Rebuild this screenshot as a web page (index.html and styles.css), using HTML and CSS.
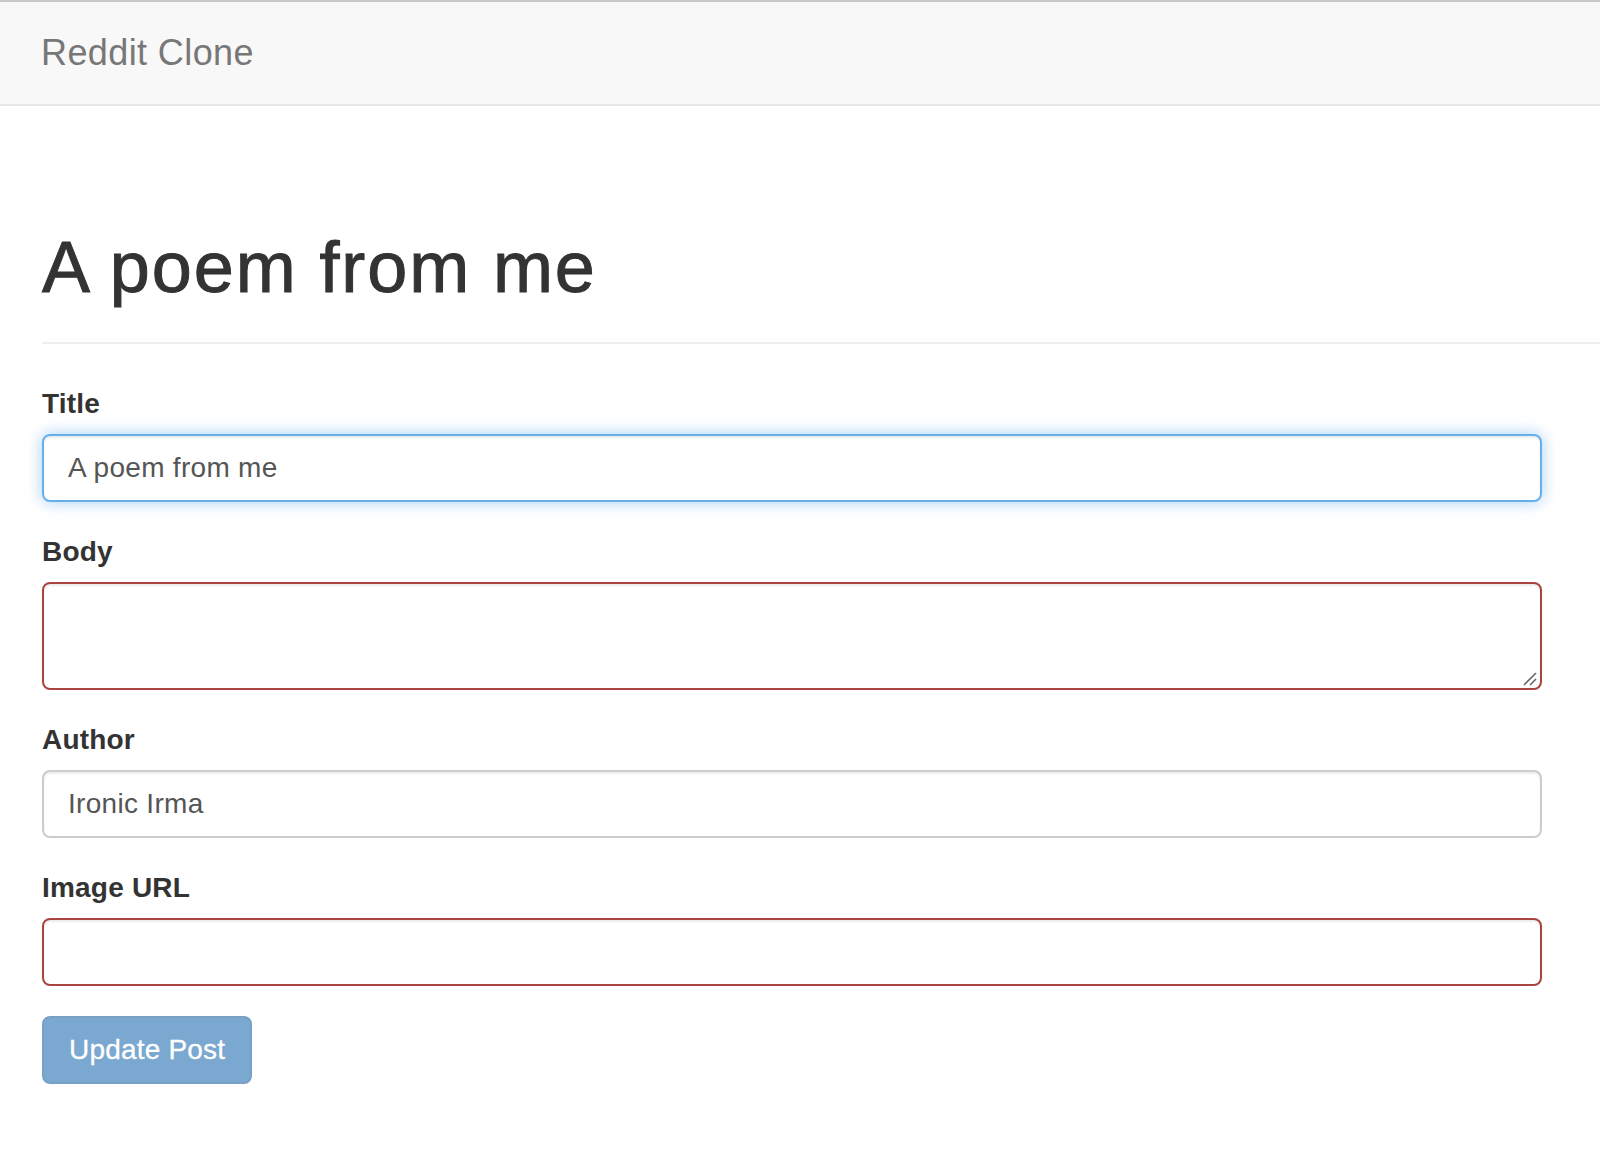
FILE: index.html
```html
<!DOCTYPE html>
<html lang="en">
<head>
<meta charset="utf-8">
<title>Reddit Clone</title>
<link rel="stylesheet" href="styles.css">
</head>
<body>
<nav class="navbar">
  <a class="brand" href="#">Reddit Clone</a>
</nav>
<main class="content">
  <div class="page-header">
    <h1>A poem from me</h1>
  </div>
  <form class="post-form">
    <div class="form-group">
      <label for="title">Title</label>
      <input id="title" class="form-control focus" type="text" value="A poem from me">
    </div>
    <div class="form-group">
      <label for="body">Body</label>
      <div class="textarea-wrap">
        <textarea id="body" class="form-control error" rows="2"></textarea>
        <svg class="grip" width="14" height="14" viewBox="0 0 14 14" aria-hidden="true">
          <line x1="1" y1="13" x2="13" y2="1" stroke="#666" stroke-width="1.6"/>
          <line x1="7" y1="13" x2="13" y2="7" stroke="#666" stroke-width="1.6"/>
        </svg>
      </div>
    </div>
    <div class="form-group">
      <label for="author">Author</label>
      <input id="author" class="form-control" type="text" value="Ironic Irma">
    </div>
    <div class="form-group">
      <label for="image">Image URL</label>
      <input id="image" class="form-control error" type="text" value="">
    </div>
    <button type="button" class="btn-primary" disabled>Update Post</button>
  </form>
</main>
</body>
</html>
```

FILE: styles.css
```css
* {
  box-sizing: border-box;
}

html, body {
  margin: 0;
  padding: 0;
  background: #fff;
}

body {
  font-family: "Liberation Sans", Arial, Helvetica, sans-serif;
  font-size: 28px;
  line-height: 40px;
  color: #333;
  letter-spacing: 0.3px;
}

.navbar {
  height: 106px;
  background: #f8f8f8;
  border-top: 2px solid #c8c8c8;
  border-bottom: 2px solid #e7e7e7;
  padding: 31px 0 0 41px;
}

.brand {
  display: inline-block;
  font-size: 36px;
  line-height: 40px;
  color: #777;
  text-decoration: none;
  letter-spacing: 0.4px;
}

.content {
  padding-left: 42px;
}

.page-header {
  margin-top: 121px;
  padding-bottom: 35px;
  border-bottom: 2px solid #eee;
  margin-bottom: 40px;
}

.page-header h1 {
  margin: 0;
  font-size: 72px;
  line-height: 80px;
  font-weight: 400;
  color: #333;
  letter-spacing: 1.9px;
  -webkit-text-stroke: 1px #333;
}

.post-form {
  width: 1500px;
}

.form-group {
  margin-bottom: 30px;
}

.form-group label {
  display: block;
  font-weight: 700;
  margin-bottom: 10px;
  line-height: 40px;
  letter-spacing: 0.2px;
}

.form-control {
  display: block;
  width: 100%;
  height: 68px;
  padding: 12px 24px;
  font-family: inherit;
  font-size: 28px;
  line-height: 40px;
  letter-spacing: 0.3px;
  color: #555;
  background: #fff;
  border: 2px solid #ccc;
  border-radius: 8px;
  box-shadow: inset 0 2px 2px rgba(0, 0, 0, 0.075);
  outline: none;
  margin: 0;
}

.textarea-wrap {
  position: relative;
}

textarea.form-control {
  height: 108px;
  resize: none;
}

.grip {
  position: absolute;
  right: 5px;
  bottom: 4px;
  pointer-events: none;
}

.form-control.focus {
  border-color: #66afe9;
  box-shadow: inset 0 2px 2px rgba(0, 0, 0, 0.075), 0 0 16px rgba(102, 175, 233, 0.6);
}

.form-control.error {
  border-color: #a94442;
}

.btn-primary {
  display: inline-block;
  height: 68px;
  padding: 12px 25px;
  font-family: inherit;
  font-size: 28px;
  line-height: 40px;
  letter-spacing: 0.2px;
  color: #fff;
  background: #7aa8d0;
  border: 2px solid #77a0c4;
  border-radius: 8px;
  cursor: not-allowed;
  -webkit-text-stroke: 0.3px #fff;
}
```
